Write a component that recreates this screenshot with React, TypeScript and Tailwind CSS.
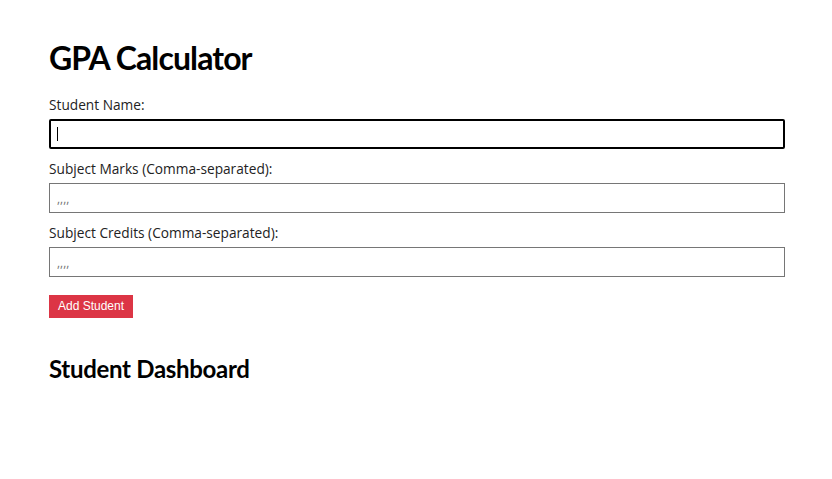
import React from "react";

const fields = [
  { label: "Subject Marks (Comma-separated):" },
  { label: "Subject Credits (Comma-separated):" },
];

export default function App() {
  return (
    <div className="min-h-screen bg-white text-black [font-family:'Open_Sans','Noto_Sans',sans-serif]">
      <div className="ml-[49px] w-[736px] pt-[38px]">
        <h1 className="text-[32px] font-bold leading-[40px] tracking-[-0.9px] [font-family:Lato,'Open_Sans',sans-serif]">
          GPA Calculator
        </h1>

        <form className="mt-[21px] flex flex-col">
          <label className="text-[13.7px] leading-[12px] text-[#222]">Student Name:</label>
          <div className="relative mt-[8px] mb-[14px]">
            <input
              type="text"
              className="block h-[30px] w-full rounded-[2px] border-2 border-black px-[7px] text-[13px] outline-none"
            />
            <span className="pointer-events-none absolute left-[8px] top-[8px] h-[14px] w-px bg-black" />
          </div>

          {fields.map((f) => (
            <React.Fragment key={f.label}>
              <label className="text-[13.7px] leading-[12px] text-[#222]">{f.label}</label>
              <input
                type="text"
                placeholder=",,,,"
                className="mt-[8px] mb-[14px] block h-[30px] w-full border border-[#767676] px-[7px] text-[12px] outline-none placeholder:text-[#757575]"
              />
            </React.Fragment>
          ))}

          <div className="mt-[1px]">
            <button
              type="button"
              className="h-[23px] bg-[#dc3545] px-[9px] text-[12px] text-white [font-family:'Liberation_Sans',Arial,sans-serif]"
            >
              Add Student
            </button>
          </div>
        </form>

        <h2 className="mt-[36px] text-[24px] font-bold leading-[30px] tracking-[-0.3px] [font-family:Lato,'Open_Sans',sans-serif]">
          Student Dashboard
        </h2>
      </div>
    </div>
  );
}
